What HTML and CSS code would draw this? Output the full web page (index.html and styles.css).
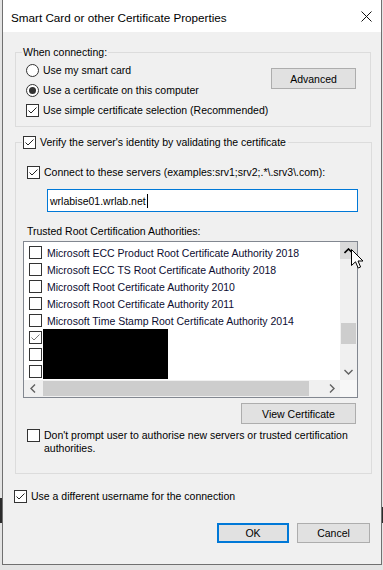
FILE: index.html
```html
<!DOCTYPE html>
<html>
    <head>
        <title>Smart Card or other Certificate Properties</title>
        <link rel="stylesheet" href="styles.css">
    </head>
    <body>
        <div class='window'>
            <div class='titlebar'>
                <span>Smart Card or other Certificate Properties</span>
                <svg class='close' width='11' height='11' viewBox='0 0 11 11'>
                    <path d='M0.5 0.5 L10.5 10.5 M10.5 0.5 L0.5 10.5' stroke='#111' stroke-width='1' fill='none'/>
                </svg>
            </div>

            <fieldset class='group connectGroup'>
                <legend>When connecting:</legend>
                <div class='connectBody'>
                    <div class='options'>
                        <div class='row'><span class='radio'></span>Use my smart card</div>
                        <div class='row'><span class='radio on'></span>Use a certificate on this computer</div>
                        <div class='row'>
                            <span class='check'><svg width='11' height='11' viewBox='0 0 11 11'><path d='M1.5 5.5 L4 8 L9.5 2.5' stroke='#222' fill='none'/></svg></span>
                            Use simple certificate selection (Recommended)
                        </div>
                    </div>
                    <div class='btn advanced'>Advanced</div>
                </div>
            </fieldset>

            <fieldset class='group verifyGroup'>
                <legend>
                    <div class='row legendRow'>
                        <span class='check'><svg width='11' height='11' viewBox='0 0 11 11'><path d='M1.5 5.5 L4 8 L9.5 2.5' stroke='#222' fill='none'/></svg></span>
                        Verify the server's identity by validating the certificate
                    </div>
                </legend>

                <div class='row servers'>
                    <span class='check'><svg width='11' height='11' viewBox='0 0 11 11'><path d='M1.5 5.5 L4 8 L9.5 2.5' stroke='#222' fill='none'/></svg></span>
                    Connect to these servers (examples:srv1;srv2;.*\.srv3\.com):
                </div>
                <div class='textbox'>wrlabise01.wrlab.net<span class='caret'></span></div>

                <div class='listLabel'>Trusted Root Certification Authorities:</div>
                <div class='list'>
                    <div class='items'>
                        <div class='item'><span class='check'></span>Microsoft ECC Product Root Certificate Authority 2018</div>
                        <div class='item'><span class='check'></span>Microsoft ECC TS Root Certificate Authority 2018</div>
                        <div class='item'><span class='check'></span>Microsoft Root Certificate Authority 2010</div>
                        <div class='item'><span class='check'></span>Microsoft Root Certificate Authority 2011</div>
                        <div class='item'><span class='check'></span>Microsoft Time Stamp Root Certificate Authority 2014</div>
                        <div class='item'><span class='check'><svg width='11' height='11' viewBox='0 0 11 11'><path d='M1.5 5.5 L4 8 L9.5 2.5' stroke='#7a7a7a' fill='none'/></svg></span></div>
                        <div class='item'><span class='check'></span></div>
                        <div class='item'><span class='check'></span></div>
                    </div>
                    <div class='vscroll'>
                        <div class='sbtn hover'><svg width='9' height='6' viewBox='0 0 9 6'><path d='M0.5 5 L4.5 1 L8.5 5' stroke='#000' stroke-width='1.6' fill='none'/></svg></div>
                        <div class='vtrack'><div class='vthumb'></div></div>
                        <div class='sbtn'><svg width='9' height='6' viewBox='0 0 9 6'><path d='M0.5 1 L4.5 5 L8.5 1' stroke='#606060' stroke-width='1.4' fill='none'/></svg></div>
                    </div>
                    <div class='hscroll'>
                        <div class='sbtn'><svg width='6' height='9' viewBox='0 0 6 9'><path d='M5 0.5 L1 4.5 L5 8.5' stroke='#606060' stroke-width='1.4' fill='none'/></svg></div>
                        <div class='htrack'><div class='hthumb'></div></div>
                        <div class='sbtn'><svg width='6' height='9' viewBox='0 0 6 9'><path d='M1 0.5 L5 4.5 L1 8.5' stroke='#606060' stroke-width='1.4' fill='none'/></svg></div>
                    </div>
                    <div class='corner'></div>
                    <div class='redacted'></div>
                </div>

                <div class='viewRow'><div class='btn viewCert'>View Certificate</div></div>

                <div class='row prompt'>
                    <span class='check'></span>
                    <span class='promptText'>Don't prompt user to authorise new servers or trusted certification authorities.</span>
                </div>
            </fieldset>

            <div class='row username'>
                <span class='check'><svg width='11' height='11' viewBox='0 0 11 11'><path d='M1.5 5.5 L4 8 L9.5 2.5' stroke='#222' fill='none'/></svg></span>
                Use a different username for the connection
            </div>

            <div class='actions'>
                <div class='btn default'>OK</div>
                <div class='btn'>Cancel</div>
            </div>
        </div>

        <svg class='cursor' width='13' height='21' viewBox='0 0 13 21'>
            <path d='M0.5 0.5 L0.5 16.5 L4.5 12.8 L7.2 19 L9.6 18 L7 12 L12 12 Z' fill='#fff' stroke='#000' stroke-width='1'/>
        </svg>
    </body>
</html>
```

FILE: styles.css
```css
*
{
    box-sizing: border-box;
}

body
{
    margin: 0;
    background:
        linear-gradient(#2b2b2b, #2b2b2b) 0 498px / 2px 25px no-repeat,
        linear-gradient(#2b2b2b, #2b2b2b) 382px 507px / 1px 16px no-repeat,
        #e4e4e4;
    font-family: "Liberation Sans", Arial, sans-serif;
    font-size: 10.5px;
    color: #000;
}

.window
{
    width: 380px;
    height: 565px;
    margin-left: 2px;
    border: 1px solid #707070;
    border-top: 0;
    background: #f0f0f0;
    display: flex;
    flex-direction: column;
}

.titlebar
{
    height: 32px;
    flex: none;
    background: #fff;
    display: flex;
    align-items: center;
    justify-content: space-between;
    padding: 2px 9px 0 8px;
    font-size: 11.7px;
}

.close
{
    margin-top: -2px;
}

.group
{
    border: 1px solid #dcdcdc;
    padding: 0;
    min-width: 0;
}

.group legend
{
    margin-left: 6px;
    padding: 0 1px;
    line-height: 15px;
}

.connectGroup
{
    margin: 13px 10px 0 12px;
    padding-bottom: 6px;
}

.connectBody
{
    display: flex;
    justify-content: space-between;
    align-items: flex-start;
    padding: 0 14px 0 10px;
}

.row
{
    display: flex;
    align-items: center;
    gap: 4px;
    height: 20px;
    white-space: nowrap;
}

.radio
{
    width: 13px;
    height: 13px;
    border: 1px solid #333;
    border-radius: 50%;
    background: #fff;
    display: flex;
    align-items: center;
    justify-content: center;
    flex: none;
}

.radio.on::after
{
    content: "";
    width: 7px;
    height: 7px;
    border-radius: 50%;
    background: #333;
}

.check
{
    width: 13px;
    height: 13px;
    border: 1px solid #333;
    background: #fff;
    display: flex;
    align-items: center;
    justify-content: center;
    flex: none;
}

.btn
{
    background: #e1e1e1;
    border: 1px solid #adadad;
    display: flex;
    align-items: center;
    justify-content: center;
    height: 21px;
    flex: none;
}

.advanced
{
    width: 85px;
    margin-top: 8px;
}

.verifyGroup
{
    margin: 7px 9px 0 12px;
    padding-bottom: 18px;
}

.verifyGroup legend
{
    margin-left: 6px;
    padding: 0 2px 0 1px;
    line-height: 16px;
}

.legendRow
{
    height: 16px;
}

.servers
{
    margin: 12px 0 0 11px;
}

.textbox
{
    margin: 7px 0 0 31px;
    width: 311px;
    height: 23px;
    border: 1px solid #0078d7;
    background: #fff;
    padding-left: 2px;
    display: flex;
    align-items: center;
}

.caret
{
    width: 1px;
    height: 14px;
    background: #000;
    margin-left: 1px;
}

.listLabel
{
    margin: 12px 0 0 11px;
    line-height: 15px;
}

.list
{
    position: relative;
    margin: 2px 0 0 7px;
    width: 335px;
    height: 157px;
    border: 1px solid #828790;
    background: #fff;
    display: grid;
    grid-template-columns: 1fr 17px;
    grid-template-rows: 1fr 17px;
    overflow: hidden;
}

.items
{
    padding: 2px 0 0 5px;
    overflow: hidden;
    color: #0c0c30;
}

.item
{
    display: flex;
    align-items: center;
    gap: 5px;
    height: 17px;
    white-space: nowrap;
}

.vscroll
{
    background: #f0f0f0;
    display: flex;
    flex-direction: column;
}

.hscroll
{
    background: #f0f0f0;
    display: flex;
}

.sbtn
{
    width: 17px;
    height: 17px;
    flex: none;
    display: flex;
    align-items: center;
    justify-content: center;
}

.sbtn.hover
{
    background: #dadada;
}

.vtrack
{
    flex: 1;
}

.vthumb
{
    margin: 64px 1px 0 1px;
    height: 21px;
    background: #cdcdcd;
}

.htrack
{
    flex: 1;
    padding: 1px 0 1px 2px;
}

.hthumb
{
    width: 266px;
    height: 15px;
    background: #cdcdcd;
}

.corner
{
    background: #f7f7f7;
}

.redacted
{
    position: absolute;
    left: 19px;
    top: 87px;
    width: 125px;
    height: 50px;
    background: #000;
}

.viewRow
{
    display: flex;
    justify-content: flex-end;
    margin: 5px 15px 0 0;
}

.viewCert
{
    width: 115px;
}

.prompt
{
    margin: 5px 10px 0 11px;
    height: auto;
    align-items: flex-start;
    white-space: normal;
    line-height: 13px;
}

.username
{
    margin: 12px 0 0 11px;
}

.actions
{
    display: flex;
    justify-content: flex-end;
    gap: 8px;
    margin: 17px 11px 0 0;
}

.actions .btn
{
    width: 73px;
    height: 20px;
}

.actions .default
{
    width: 72px;
    border: 2px solid #0078d7;
}

.cursor
{
    position: absolute;
    left: 351px;
    top: 249px;
}
```
